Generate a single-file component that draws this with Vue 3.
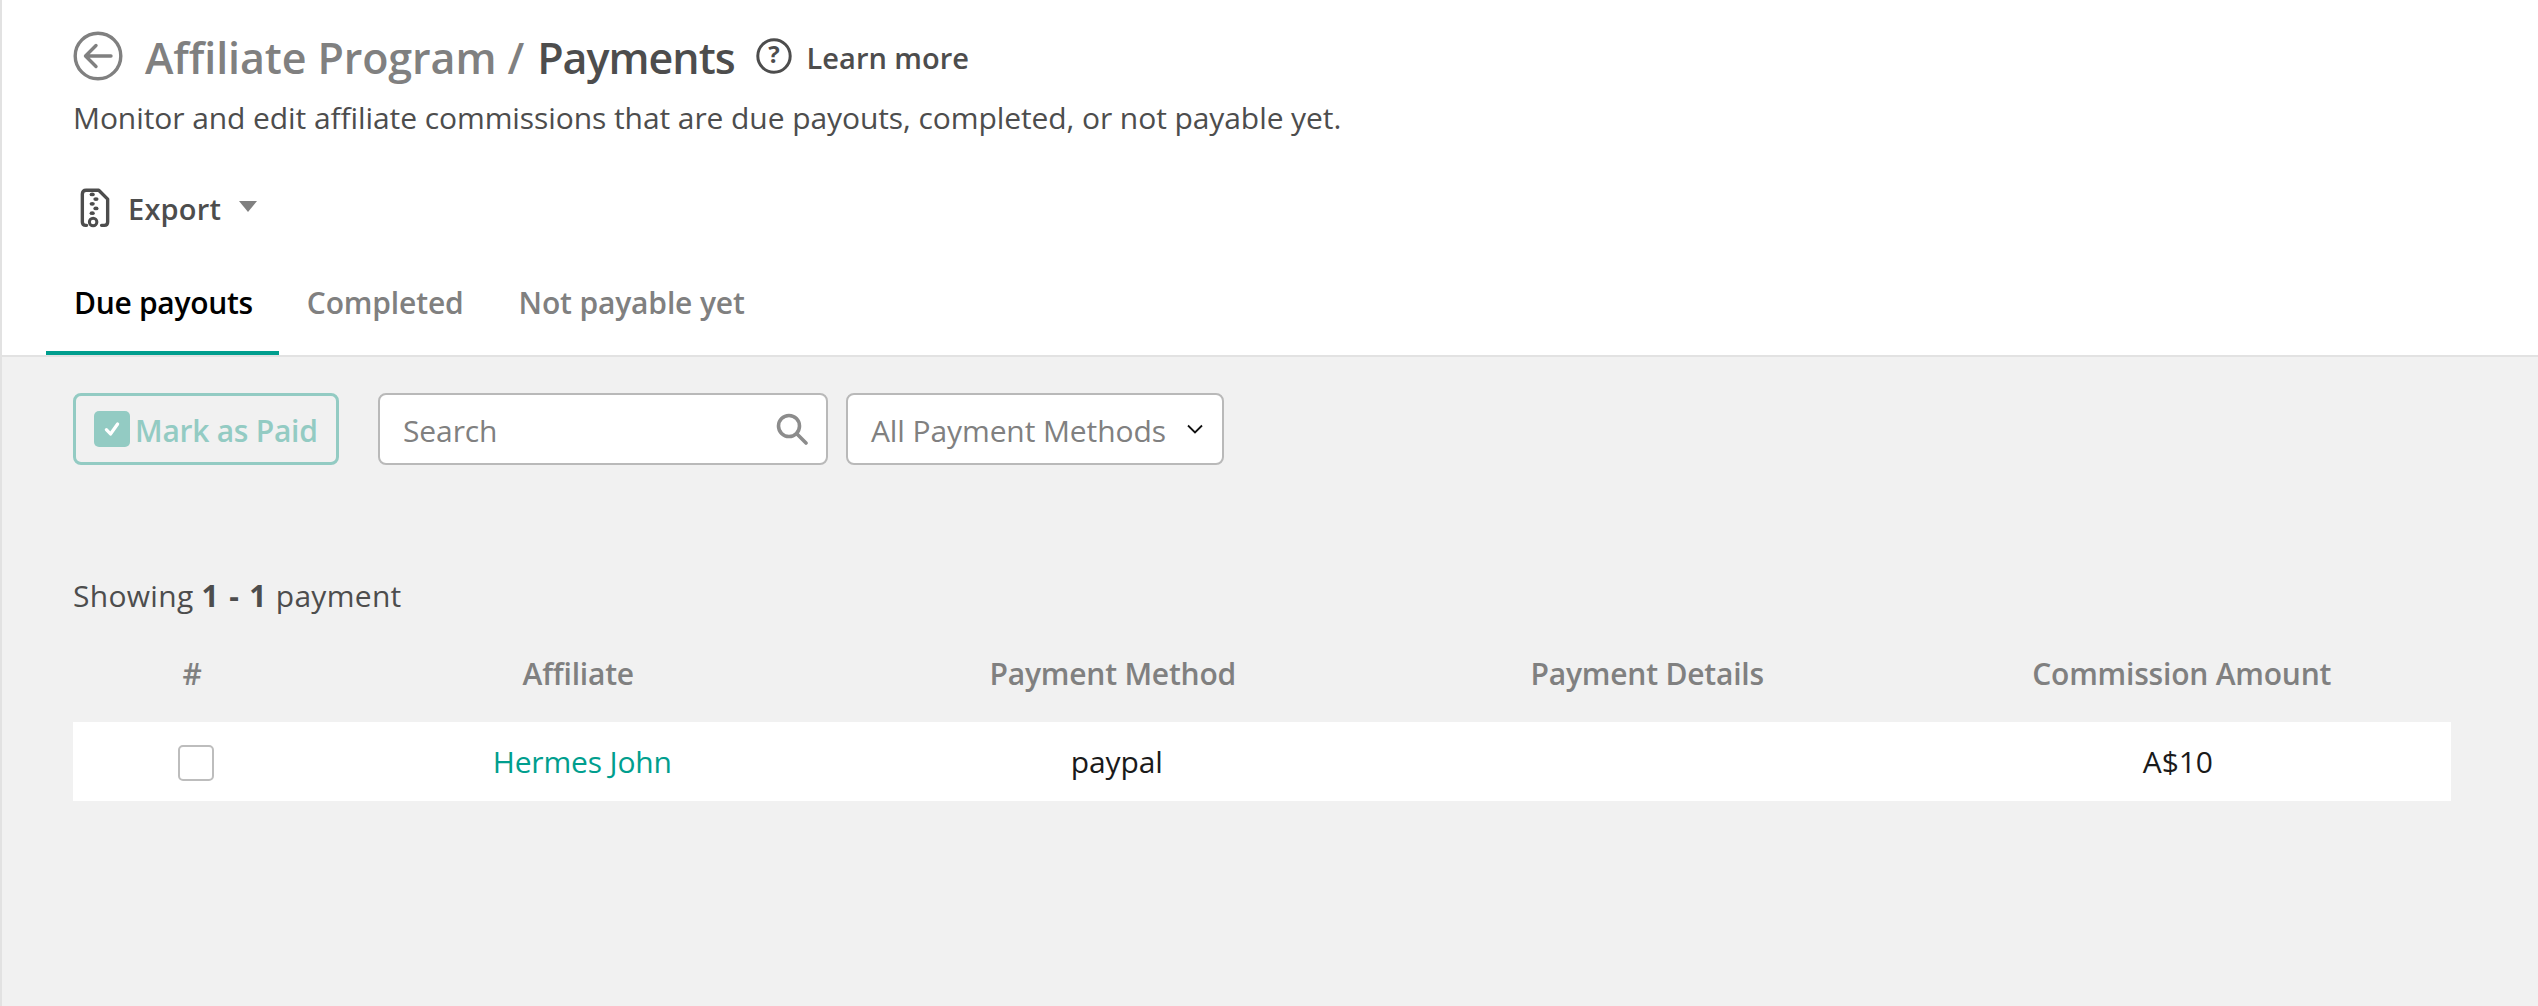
<template>
  <div class="page">
    <header class="head">
      <div class="title-row">
        <svg class="back" viewBox="0 0 50 50" fill="none" stroke="#808080" stroke-width="3.4" stroke-linecap="round" stroke-linejoin="round">
          <circle cx="25" cy="25" r="22.8" />
          <path d="M38 25H13M23 14.500 12.500 25 23 35.500" />
        </svg>
        <h1 class="title"><span class="crumb">Affiliate Program /</span> <span class="cur">Payments</span></h1>
        <svg class="help" viewBox="0 0 36 36" fill="none">
          <circle cx="18" cy="18" r="16.200" stroke="#4d4d4d" stroke-width="3" />
          <text x="18" y="24.500" text-anchor="middle" class="q">?</text>
        </svg>
        <span class="learn">Learn more</span>
      </div>
      <p class="sub">Monitor and edit affiliate commissions that are due payouts, completed, or not payable yet.</p>
      <div class="export">
        <svg class="zip" viewBox="0 0 32 42" fill="none" stroke="#4d4d4d" stroke-width="3.600" stroke-linecap="round" stroke-linejoin="round">
          <path d="M7 39.500H6Q2.500 39.500 2.500 36V6Q2.500 2 6.500 2H20L29.500 11.500V36Q29.500 39.500 26 39.500H23" />
          <circle cx="14" cy="36" r="4" stroke-width="3.200" />
          <g fill="#4d4d4d" stroke="none">
            <ellipse cx="13" cy="6.500" rx="2.800" ry="2" /><ellipse cx="17" cy="11.500" rx="2.800" ry="2" /><ellipse cx="13" cy="16.500" rx="2.800" ry="2" /><ellipse cx="17" cy="21.500" rx="2.800" ry="2" /><ellipse cx="13" cy="26.500" rx="2.800" ry="2" />
          </g>
        </svg>
        <span class="export-label">Export</span>
        <span class="caret"></span>
      </div>
      <nav class="tabs">
        <a class="tab active">Due payouts</a>
        <a class="tab">Completed</a>
        <a class="tab">Not payable yet</a>
      </nav>
    </header>
    <main class="body">
      <div class="filters">
        <button class="mark">
          <span class="mark-box">
            <svg viewBox="0 0 16 16" fill="none" stroke="#fff" stroke-width="2.600" stroke-linecap="round" stroke-linejoin="round"><path d="M3.500 8.500 6.800 12 12.500 4" /></svg>
          </span>
          <span class="mark-label">Mark as Paid</span>
        </button>
        <div class="search">
          <span class="field-label">Search</span>
          <svg viewBox="0 0 32 32" fill="none" stroke="#8c8c8c" stroke-width="3.600" stroke-linecap="round"><circle cx="13" cy="13" r="10.500" /><path d="M21 21 30 30" /></svg>
        </div>
        <div class="select">
          <span class="field-label">All Payment Methods</span>
          <svg viewBox="0 0 16 10" fill="none" stroke="#111" stroke-width="1.800"><path d="M1 1.500 8 8.500 15 1.500" /></svg>
        </div>
      </div>
      <p class="showing">Showing <b>1 - 1</b> payment</p>
      <div class="thead">
        <div class="th hash">#</div>
        <div class="th">Affiliate</div>
        <div class="th">Payment Method</div>
        <div class="th">Payment Details</div>
        <div class="th">Commission Amount</div>
      </div>
      <div class="row">
        <div class="td check-cell"><span class="check"></span></div>
        <div class="td nudge"><a class="link">Hermes John</a></div>
        <div class="td nudge">paypal</div>
        <div class="td"></div>
        <div class="td amount">A$10</div>
      </div>
    </main>
  </div>
</template>

<script setup>
</script>

<style>
html, body { margin: 0; background: #f1f1f1; }
</style>

<style scoped>
.page {
  width: 2538px;
  height: 1006px;
  box-sizing: border-box;
  border-left: 2px solid #e2e2e2;
  font-family: "Open Sans", "Noto Sans", sans-serif;
  display: flex;
  flex-direction: column;
  background: #f1f1f1;
  overflow: hidden;
}
.head {
  background: #fff;
  border-bottom: 2px solid #e2e2e2;
  height: 357px;
  box-sizing: border-box;
  padding: 31px 0 0 72px;
  display: flex;
  flex-direction: column;
}
.title-row { display: flex; align-items: center; height: 50px; }
.back { width: 50px; height: 50px; flex: none; margin-left: -1px; }
.title { margin: 3px 0 0 22px; font-size: 43px; font-weight: 600; letter-spacing: -0.100px; line-height: 50px; white-space: pre; }
.crumb { color: #808080; }
.cur { color: #4d4d4d; letter-spacing: -1.000px; margin-left: 2px; }
.help { width: 36px; height: 36px; margin-left: 21px; flex: none; }
.q { font-size: 24px; font-weight: 700; fill: #4d4d4d; font-family: "Open Sans", sans-serif; }
.learn { margin: 3px 0 0 15px; font-size: 29px; font-weight: 600; color: #4d4d4d; }
.sub { margin: 17px 0 0; font-size: 30px; line-height: 40px; color: #4d4d4d; letter-spacing: -0.080px; white-space: nowrap; margin-left: -1px; }
.export { display: flex; align-items: center; margin-top: 48px; height: 44px; padding-left: 6px; }
.zip { width: 30px; height: 40px; flex: none; }
.export-label { margin-left: 18px; font-size: 29px; font-weight: 600; color: #4d4d4d; letter-spacing: 0.200px; }
.caret { margin-left: 18px; margin-bottom: 4px; border: 9px solid transparent; border-top: 11px solid #808080; border-bottom: 0; }
.tabs { display: flex; margin: auto 0 0 -28px; }
.tab {
  padding: 0 27px 0 28px;
  height: 68px;
  box-sizing: border-box;
  font-size: 30px;
  font-weight: 600;
  line-height: 32px;
  color: #808080;
  letter-spacing: -0.150px;
  border-bottom: 4px solid transparent;
}
.tab.active { color: #000; border-bottom-color: #009e8e; padding-right: 26px; letter-spacing: -0.300px; }
.body { flex: 1; padding: 36px 87px 0 71px; }
.filters { display: flex; align-items: stretch; height: 72px; }
.mark {
  width: 266px;
  box-sizing: border-box;
  border: 3px solid #93cbc3;
  border-radius: 8px;
  background: transparent;
  padding: 0 0 0 18px;
  display: flex;
  align-items: center;
  gap: 5px;
  font: inherit;
  font-size: 30px;
  font-weight: 600;
  color: #93cbc3;
  letter-spacing: -0.250px;
  white-space: nowrap;
}
.mark-label, .field-label { padding-top: 2px; }
.mark-box { width: 36px; height: 36px; border-radius: 5px; background: #93cbc3; display: flex; align-items: center; justify-content: center; flex: none; }
.mark-box svg { width: 20px; height: 20px; }
.search, .select {
  box-sizing: border-box;
  border: 2px solid #b9b9b9;
  border-radius: 8px;
  background: #fff;
  display: flex;
  align-items: center;
  font-size: 30px;
  color: #808080;
  letter-spacing: -0.100px;
}
.search { width: 450px; margin-left: 39px; padding: 0 18px 0 23px; justify-content: space-between; }
.search svg { width: 32px; height: 32px; }
.select { width: 378px; margin-left: 18px; padding: 0 19px 0 23px; justify-content: space-between; white-space: nowrap; }
.select svg { width: 16px; height: 10px; }
.showing { margin: 111px 0 0; font-size: 30px; line-height: 40px; color: #4d4d4d; letter-spacing: 0.300px; }
.showing b { font-weight: 700; letter-spacing: 1.300px; }
.thead, .row { display: grid; grid-template-columns: 238px repeat(4, 534.500px); }
.thead { margin-top: 8px; height: 98px; align-items: center; }
.th { text-align: center; font-size: 30px; font-weight: 600; color: #808080; letter-spacing: -0.200px; }
.row { height: 79px; background: #fff; align-items: center; }
.td { text-align: center; font-size: 30px; color: #1a1a1a; letter-spacing: -0.150px; }
.nudge { padding-left: 8px; }
.amount { padding-right: 8px; }
.check-cell { display: flex; justify-content: center; padding-left: 8px; }
.check { width: 36px; height: 36px; margin-top: 3px; box-sizing: border-box; border: 2px solid #bdbdbd; border-radius: 5px; background: #fff; }
.link { color: #009e8e; }
</style>
